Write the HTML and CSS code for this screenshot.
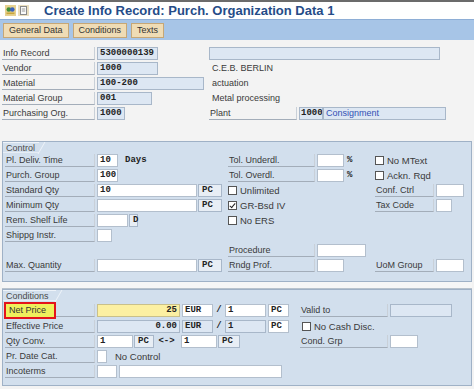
FILE: index.html
```
<!DOCTYPE html>
<html lang="en">
<head>
    <meta charset="UTF-8">
    <title>Create Info Record: Purch. Organization Data 1</title>
    <link rel="stylesheet" href="styles.css">
</head>
<body>
    <div class="topline"></div>
    <div class="titlebar">
        <svg class="title-icons" width="24" height="11" viewBox="0 0 24 11">
            <rect x="0" y="0" width="11" height="11" fill="#e6d190"/>
            <circle cx="3.8" cy="4.5" r="2.3" fill="#3f8f3a"/>
            <circle cx="7.3" cy="4.5" r="2.3" fill="#3a62bd"/>
            <rect x="1.5" y="7.5" width="8" height="1.6" fill="#c9a63a"/>
            <rect x="13" y="0" width="11" height="11" fill="#ebdfc0"/>
            <rect x="15.5" y="1.5" width="6" height="8" fill="#fafafa" stroke="#8a8a8a" stroke-width="1"/>
            <line x1="16.8" y1="4" x2="20.2" y2="4" stroke="#9a9a9a"/>
            <line x1="16.8" y1="6" x2="20.2" y2="6" stroke="#9a9a9a"/>
        </svg>
        <h1>Create Info Record: Purch. Organization Data 1</h1>
    </div>
    <div class="toolbar">
        <button type="button">General Data</button>
        <button type="button">Conditions</button>
        <button type="button">Texts</button>
    </div>

    <!-- header data -->
    <div class="head">
        <div class="row">
            <div class="left"><div class="lbl">Info Record</div><div class="fld w61">5300000139</div></div>
            <div class="fld w231 flush"></div>
        </div>
        <div class="row">
            <div class="left"><div class="lbl">Vendor</div><div class="fld w61">1000</div></div>
            <div class="txt">C.E.B. BERLIN</div>
        </div>
        <div class="row">
            <div class="left"><div class="lbl">Material</div><div class="fld w107">100-200</div></div>
            <div class="txt">actuation</div>
        </div>
        <div class="row">
            <div class="left"><div class="lbl">Material Group</div><div class="fld w55">001</div></div>
            <div class="txt">Metal processing</div>
        </div>
        <div class="row">
            <div class="left"><div class="lbl">Purchasing Org.</div><div class="fld w28">1000</div></div>
            <div class="lbl plant">Plant</div><div class="fld w24 snug">1000</div><div class="fld w123 flush desc">Consignment</div>
        </div>
    </div>

    <!-- control -->
    <div class="section control">
        <div class="tab">Control</div>
        <div class="rows">
            <div class="crow">
                <div class="cell"><div class="lbl">Pl. Deliv. Time</div><div class="fld white w21">10</div><span class="mono days">Days</span></div>
                <div class="cell"><div class="lbl lb">Tol. Underdl.</div><div class="fld white w27"></div><span class="mono pct">%</span></div>
                <div class="cell"><label class="chk"><span class="box"></span>No MText</label></div>
            </div>
            <div class="crow">
                <div class="cell"><div class="lbl">Purch. Group</div><div class="fld white w21">100</div></div>
                <div class="cell"><div class="lbl lb">Tol. Overdl.</div><div class="fld white w27"></div><span class="mono pct">%</span></div>
                <div class="cell"><label class="chk"><span class="box"></span>Ackn. Rqd</label></div>
            </div>
            <div class="crow">
                <div class="cell"><div class="lbl">Standard Qty</div><div class="fld white w100">10</div><div class="unit w24">PC</div></div>
                <div class="cell"><label class="chk"><span class="box"></span>Unlimited</label></div>
                <div class="cell"><div class="lbl lc">Conf. Ctrl</div><div class="fld white w28"></div></div>
            </div>
            <div class="crow">
                <div class="cell"><div class="lbl">Minimum Qty</div><div class="fld white w100"></div><div class="unit w24">PC</div></div>
                <div class="cell"><label class="chk"><span class="box checked"></span>GR-Bsd IV</label></div>
                <div class="cell"><div class="lbl lc">Tax Code</div><div class="fld white w16"></div></div>
            </div>
            <div class="crow">
                <div class="cell"><div class="lbl">Rem. Shelf Life</div><div class="fld white w31"></div><div class="unit w9">D</div></div>
                <div class="cell"><label class="chk"><span class="box"></span>No ERS</label></div>
                <div class="cell"></div>
            </div>
            <div class="crow">
                <div class="cell"><div class="lbl">Shippg Instr.</div><div class="fld white w15"></div></div>
                <div class="cell"></div>
                <div class="cell"></div>
            </div>
            <div class="crow">
                <div class="cell"></div>
                <div class="cell"><div class="lbl lb">Procedure</div><div class="fld white w49"></div></div>
                <div class="cell"></div>
            </div>
            <div class="crow">
                <div class="cell"><div class="lbl">Max. Quantity</div><div class="fld white w100"></div><div class="unit w24">PC</div></div>
                <div class="cell"><div class="lbl lb">Rndg Prof.</div><div class="fld white w27"></div></div>
                <div class="cell"><div class="lbl lc">UoM Group</div><div class="fld white w28"></div></div>
            </div>
        </div>
    </div>

    <div class="gap"></div>

    <!-- conditions -->
    <div class="section cond">
        <div class="tab wide">Conditions</div>
        <div class="rows">
            <div class="qrow first">
                <div class="cell"><div class="lbl"><span class="hl">Net Price</span></div><div class="fld yellow num w83">25</div><div class="fld white w31">EUR</div><span class="mono sep">/</span><div class="fld white w41">1</div><div class="fld white w21">PC</div></div>
                <div class="cell"><div class="lbl lv">Valid to</div><div class="fld w62"></div></div>
            </div>
            <div class="qrow">
                <div class="cell"><div class="lbl">Effective Price</div><div class="fld num w83">0.00</div><div class="fld w31">EUR</div><span class="mono sep">/</span><div class="fld w41">1</div><div class="fld white w21">PC</div></div>
                <div class="cell"><label class="chk indent"><span class="box"></span>No Cash Disc.</label></div>
            </div>
            <div class="qrow">
                <div class="cell"><div class="lbl">Qty Conv.</div><div class="fld white w36">1</div><div class="unit w20">PC</div><span class="mono conv">&lt;-&gt;</span><div class="fld white w36">1</div><div class="unit w22">PC</div></div>
                <div class="cell"><div class="lbl lv">Cond. Grp</div><div class="fld white w28"></div></div>
            </div>
            <div class="qrow">
                <div class="cell"><div class="lbl">Pr. Date Cat.</div><div class="fld white w10"></div><span class="nocontrol">No Control</span></div>
                <div class="cell"></div>
            </div>
            <div class="qrow">
                <div class="cell"><div class="lbl">Incoterms</div><div class="fld white w20"></div><div class="fld white w163"></div></div>
                <div class="cell"></div>
            </div>
        </div>
    </div>
</body>
</html>
```

FILE: styles.css
```
/* Basic Reset */
* {
    margin: 0;
    padding: 0;
    box-sizing: border-box;
}

body {
    width: 474px;
    height: 389px;
    overflow: hidden;
    font-family: "Liberation Sans", Arial, sans-serif;
    font-size: 9px;
    color: #3a3a3a;
    background: #f3f3f3;
}

.mono {
    font-family: "Liberation Mono", monospace;
    font-weight: bold;
    color: #222;
}

/* title + toolbar */
.topline {
    height: 2px;
    background: #6b6b6b;
}

.titlebar {
    height: 18px;
    display: flex;
    align-items: center;
    background: #fff;
    border-bottom: 1px solid #8eaed6;
}

.title-icons {
    margin-left: 5px;
}

.titlebar h1 {
    margin-left: 15px;
    font-size: 13px;
    font-weight: bold;
    color: #254c88;
}

.toolbar {
    height: 20px;
    display: flex;
    align-items: center;
    gap: 4px;
    padding-left: 3px;
    background: #a7c5e7;
}

.toolbar button {
    height: 15px;
    padding: 0 5px;
    font: 9px "Liberation Sans", Arial, sans-serif;
    color: #333;
    background: #efdcb5;
    border: 1px solid #c6a776;
}

/* generic rows */
.row {
    display: flex;
    height: 15px;
}

.left {
    display: flex;
    width: 207px;
    flex: none;
}

.lbl {
    height: 13px;
    line-height: 12px;
    padding-left: 1px;
    white-space: nowrap;
    border-bottom: 1px solid #a3adb9;
    border-right: 1px solid #c9d0d8;
    flex: none;
}

.fld {
    height: 13px;
    margin-left: 2px;
    padding: 0 2px;
    font: bold 9px "Liberation Mono", monospace;
    line-height: 11px;
    color: #222;
    white-space: nowrap;
    overflow: hidden;
    background: #dde7f3;
    border: 1px solid #a8b7c9;
    flex: none;
}

.fld.white {
    background: #fff;
    border-color: #b3bfcd;
}

.fld.yellow {
    background: #fcf0a2;
    border-color: #c9c08a;
}

.fld.num {
    text-align: right;
}

.fld.flush {
    margin-left: 0;
}

.fld.snug {
    padding: 0 1px;
}

.fld.desc {
    font: 9px "Liberation Sans", Arial, sans-serif;
    line-height: 11px;
    color: #3350b5;
}

.unit {
    height: 13px;
    margin-left: 1px;
    padding-left: 3px;
    font: bold 9px "Liberation Mono", monospace;
    line-height: 11px;
    color: #222;
    background: #e8eef5;
    border: 1px solid #a8b7c9;
    flex: none;
}

.txt {
    line-height: 13px;
    padding-left: 3px;
}

/* widths */
.w9 { width: 9px; }
.w10 { width: 10px; }
.w15 { width: 15px; }
.w16 { width: 16px; }
.w20 { width: 20px; }
.w21 { width: 21px; }
.w22 { width: 22px; }
.w24 { width: 24px; }
.w27 { width: 27px; }
.w28 { width: 28px; }
.w31 { width: 31px; }
.w36 { width: 36px; }
.w41 { width: 41px; }
.w49 { width: 49px; }
.w55 { width: 55px; }
.w61 { width: 61px; }
.w62 { width: 62px; }
.w83 { width: 83px; }
.w100 { width: 100px; }
.w107 { width: 107px; }
.w123 { width: 123px; }
.w163 { width: 163px; }
.w231 { width: 231px; }

/* header block */
.head {
    padding: 7px 0 0 2px;
    height: 101px;
}

.head .lbl {
    width: 93px;
}

.head .lbl.plant {
    width: 88px;
}

/* sections */
.section {
    margin: 0 2px;
    background: #d2dfed;
    border: 1px solid #9fb1c6;
}

.tab {
    position: relative;
    width: 36px;
    height: 11px;
    line-height: 10px;
    padding-left: 3px;
    color: #4a4a4a;
    border-top: 1px solid #eef3f9;
    border-bottom: 1px solid #e6edf5;
}

.tab::after {
    content: "";
    position: absolute;
    right: -3px;
    top: -1px;
    width: 1px;
    height: 12px;
    background: #eef3f9;
    transform: skewX(-30deg);
}

.tab.wide {
    width: 53px;
}

.rows {
    padding: 1px 0 7px 2px;
}

.crow {
    display: grid;
    grid-template-columns: 223px 147px 1fr;
    height: 15px;
}

.cell {
    display: flex;
}

.control .lbl {
    width: 90px;
}

.control .lbl.lb {
    width: 87px;
}

.control .lbl.lc {
    width: 59px;
}

.days {
    margin-left: 7px;
    line-height: 13px;
}

.pct {
    margin-left: 3px;
    line-height: 13px;
}

/* checkbox */
.chk {
    display: flex;
    align-items: center;
    height: 13px;
    font-size: 9.5px;
}

.chk.indent {
    margin-left: 2px;
}

.box {
    position: relative;
    width: 9px;
    height: 9px;
    margin-right: 3px;
    background: #fff;
    border: 1px solid #555;
}

.box.checked::after {
    content: "";
    position: absolute;
    left: 2px;
    top: 0;
    width: 2px;
    height: 5px;
    border-right: 1.5px solid #222;
    border-bottom: 1.5px solid #222;
    transform: rotate(40deg);
}

.gap {
    height: 7px;
    margin: 0 2px;
    background: #f6f6f6;
    border-bottom: 1px solid #b8c2cc;
}

/* conditions */
.cond .rows {
    padding: 3px 0 5px 2px;
}

.qrow {
    display: grid;
    grid-template-columns: 295px 1fr;
    height: 15px;
}

.qrow.first {
    height: 16px;
}

.cond .lbl {
    width: 90px;
}

.cond .lbl.lv {
    width: 88px;
}

.hl {
    display: inline-block;
    height: 13px;
    padding: 0 8px 0 3px;
    background: #eff05c;
    color: #333;
    outline: 2px solid #e3141b;
}

.sep {
    width: 8px;
    margin-left: 2px;
    line-height: 13px;
    text-align: center;
}

.conv {
    width: 25px;
    line-height: 13px;
    text-align: center;
}

.nocontrol {
    margin-left: 8px;
    line-height: 13px;
    font-size: 9.5px;
}
```
